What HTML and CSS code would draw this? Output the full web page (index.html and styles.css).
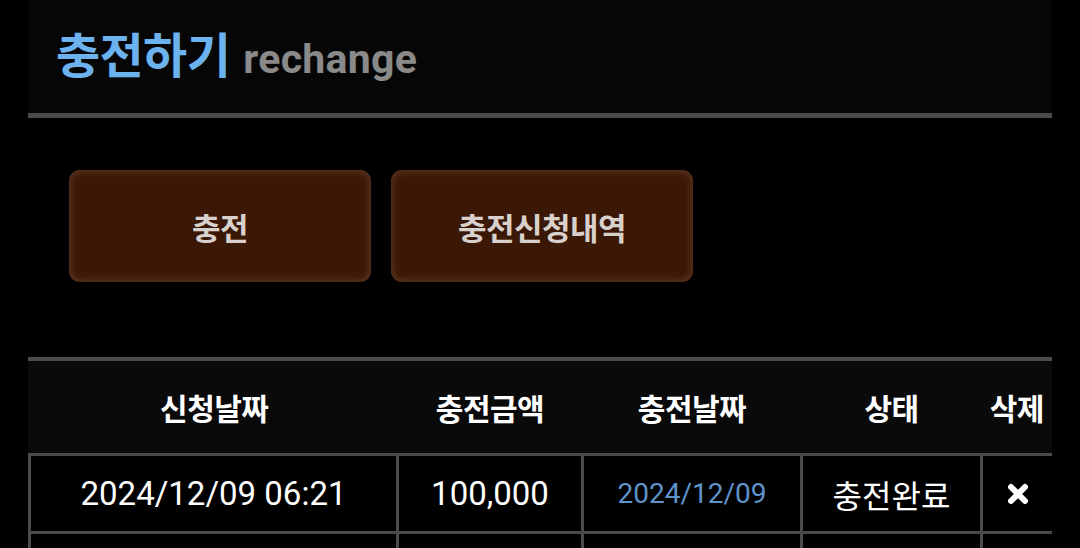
FILE: index.html
```html
<!DOCTYPE html>
<html lang="ko">
<head>
<meta charset="utf-8">
<title>충전하기</title>
<link rel="stylesheet" href="styles.css">
</head>
<body>
<div class="page">
  <header class="title-bar">
    <h1 class="title"><span class="title-ko">충전하기</span> <span class="title-en">rechange</span></h1>
  </header>
  <nav class="tabs">
    <a class="tab-btn">충전</a>
    <a class="tab-btn">충전신청내역</a>
  </nav>
  <table class="history">
    <colgroup>
      <col class="c1"><col class="c2"><col class="c3"><col class="c4"><col class="c5">
    </colgroup>
    <thead>
      <tr><th>신청날짜</th><th>충전금액</th><th>충전날짜</th><th>상태</th><th>삭제</th></tr>
    </thead>
    <tbody>
      <tr>
        <td>2024/12/09 06:21</td>
        <td>100,000</td>
        <td class="done-date">2024/12/09</td>
        <td class="status">충전완료</td>
        <td class="del"><svg class="x-icon" viewBox="0 0 24 24" width="24" height="24"><path d="M5 5 L19 19 M19 5 L5 19" stroke="#fff" stroke-width="6" stroke-linecap="round" fill="none"/></svg></td>
      </tr>
      <tr>
        <td>&nbsp;</td><td></td><td></td><td></td><td></td>
      </tr>
    </tbody>
  </table>
</div>
</body>
</html>
```
FILE: styles.css
```css
html, body {
  margin: 0;
  padding: 0;
  background: #000;
  color: #fff;
  font-family: Roboto, "Noto Sans CJK KR", sans-serif;
  overflow: hidden;
  height: 548px;
}
.page {
  margin: 0 28px;
  height: 548px;
  overflow: hidden;
}
.title-bar {
  background: #060606;
  height: 113px;
  border-bottom: 5px solid #4a4a4a;
  display: flex;
  align-items: center;
  padding-left: 28px;
}
.title {
  margin: 0;
  font-weight: 700;
  line-height: 1;
  display: flex;
  align-items: baseline;
  gap: 13px;
  margin-top: -6px;
}
.title-ko {
  font-family: "Noto Sans CJK KR", sans-serif;
  color: #6cb2ef;
  font-size: 48px;
  letter-spacing: -0.6px;
}
.title-en {
  font-family: Roboto, sans-serif;
  color: #8a8a8a;
  font-size: 41px;
  letter-spacing: 0.3px;
}
.tabs {
  display: flex;
  gap: 20px;
  padding: 52px 0 0 41px;
  height: 112px;
}
.tab-btn {
  width: 302px;
  height: 112px;
  border-radius: 11px;
  background: #3b1805;
  box-shadow: inset 0 0 7px 2px #5a3522;
  display: flex;
  align-items: center;
  justify-content: center;
  color: #d8d0cd;
  font-family: "Noto Sans CJK KR", sans-serif;
  font-weight: 700;
  font-size: 31px;
  letter-spacing: -0.5px;
}
.history {
  margin-top: 75px;
  width: 1024px;
  border-collapse: collapse;
  table-layout: fixed;
  border-top: 4px solid #4a4a4a;
}
.c1 { width: 368px; }
.c2 { width: 185px; }
.c3 { width: 219px; }
.c4 { width: 180px; }
.c5 { width: 72px; }
.history th {
  background: #0a0a0a;
  height: 92px;
  padding: 0;
  font-family: "Noto Sans CJK KR", sans-serif;
  font-weight: 700;
  font-size: 30px;
  letter-spacing: -0.5px;
  color: #fff;
  border-bottom: 3px solid #4a4a4a;
}
.history th:first-child {
  border-left: 3px solid #0a0a0a;
}
.history th:last-child {
  border-right: 3px solid #0a0a0a;
}
.history td {
  border: 3px solid #4a4a4a;
  height: 75px;
  padding: 0;
  text-align: center;
  font-size: 33px;
  color: #fff;
  font-family: Roboto, "Noto Sans CJK KR", sans-serif;
}
.history td.done-date {
  color: #5f93cb;
  font-size: 28px;
}
.history td.status {
  font-size: 32px;
}
.del .x-icon {
  display: block;
  margin: 0 auto;
}
```
